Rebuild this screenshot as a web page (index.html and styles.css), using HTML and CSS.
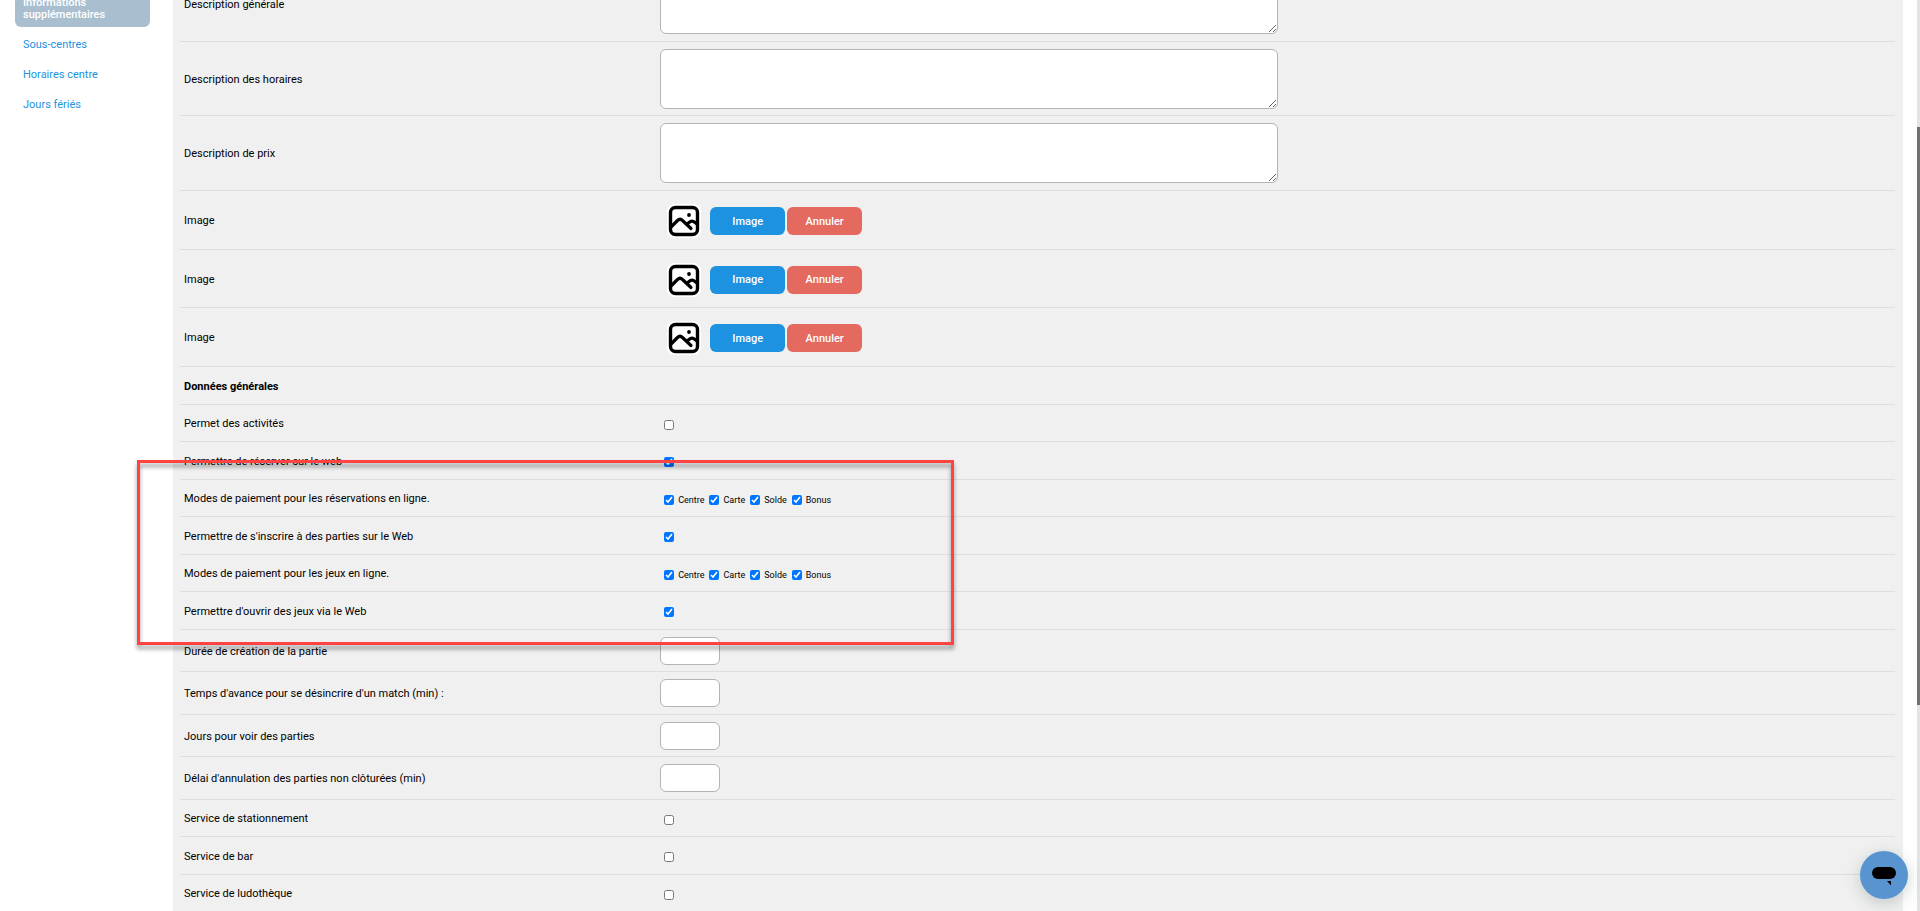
FILE: index.html
```html
<!DOCTYPE html>
<html lang="fr">
<head>
    <meta charset="UTF-8" />
    <meta name="viewport" content="width=device-width, initial-scale=1.0"/>
    <title>Informations supplémentaires</title>
    <link rel="stylesheet" href="styles.css">
</head>
<body>
<svg class="sprite" aria-hidden="true">
    <symbol id="icon-image" viewBox="0 0 36 36">
        <rect x="1" y="1" width="34" height="34" rx="7" fill="#fff"/>
        <rect x="4.5" y="4.5" width="27" height="27" rx="5" fill="none" stroke="#000" stroke-width="3.4"/>
        <circle cx="23" cy="12" r="1.9" fill="#000"/>
        <path d="M5 24L11.500 17.500Q14 15 16.500 17.500L25 25.500M21.500 21L23 19.500Q26 16.800 29 19.500L31 21" fill="none" stroke="#000" stroke-width="3.2" stroke-linecap="round"/>
    </symbol>
</svg>

<div class="layout">
    <nav class="sidebar">
        <a href="#" class="active">Informations supplémentaires</a>
        <a href="#">Sous-centres</a>
        <a href="#">Horaires centre</a>
        <a href="#">Jours fériés</a>
    </nav>

    <form class="panel">
        <div class="row row-area">
            <label class="row-label" for="descGenerale">Description générale</label>
            <div class="row-field"><textarea id="descGenerale"></textarea></div>
        </div>
        <div class="row row-area">
            <label class="row-label" for="descHoraires">Description des horaires</label>
            <div class="row-field"><textarea id="descHoraires"></textarea></div>
        </div>
        <div class="row row-area">
            <label class="row-label" for="descPrix">Description de prix</label>
            <div class="row-field"><textarea id="descPrix"></textarea></div>
        </div>

        <div class="row row-image">
            <span class="row-label">Image</span>
            <div class="row-field">
                <svg class="picture"><use href="#icon-image"/></svg>
                <button type="button" class="btn btn-blue">Image</button>
                <button type="button" class="btn btn-red">Annuler</button>
            </div>
        </div>
        <div class="row row-image">
            <span class="row-label">Image</span>
            <div class="row-field">
                <svg class="picture"><use href="#icon-image"/></svg>
                <button type="button" class="btn btn-blue">Image</button>
                <button type="button" class="btn btn-red">Annuler</button>
            </div>
        </div>
        <div class="row row-image">
            <span class="row-label">Image</span>
            <div class="row-field">
                <svg class="picture"><use href="#icon-image"/></svg>
                <button type="button" class="btn btn-blue">Image</button>
                <button type="button" class="btn btn-red">Annuler</button>
            </div>
        </div>

        <div class="row">
            <strong class="row-label">Données générales</strong>
        </div>
        <div class="row">
            <label class="row-label" for="activites">Permet des activités</label>
            <div class="row-field checks"><input type="checkbox" id="activites"></div>
        </div>
        <div class="row">
            <label class="row-label" for="reserverWeb">Permettre de réserver sur le web</label>
            <div class="row-field checks"><input type="checkbox" id="reserverWeb" checked></div>
        </div>
        <div class="row">
            <span class="row-label">Modes de paiement pour les réservations en ligne.</span>
            <div class="row-field checks">
                <label><input type="checkbox" checked>Centre</label>
                <label><input type="checkbox" checked>Carte</label>
                <label><input type="checkbox" checked>Solde</label>
                <label><input type="checkbox" checked>Bonus</label>
            </div>
        </div>
        <div class="row">
            <label class="row-label" for="inscrireWeb">Permettre de s'inscrire à des parties sur le Web</label>
            <div class="row-field checks"><input type="checkbox" id="inscrireWeb" checked></div>
        </div>
        <div class="row">
            <span class="row-label">Modes de paiement pour les jeux en ligne.</span>
            <div class="row-field checks">
                <label><input type="checkbox" checked>Centre</label>
                <label><input type="checkbox" checked>Carte</label>
                <label><input type="checkbox" checked>Solde</label>
                <label><input type="checkbox" checked>Bonus</label>
            </div>
        </div>
        <div class="row">
            <label class="row-label" for="ouvrirWeb">Permettre d'ouvrir des jeux via le Web</label>
            <div class="row-field checks"><input type="checkbox" id="ouvrirWeb" checked></div>
        </div>

        <div class="row row-input">
            <label class="row-label" for="dureeCreation">Durée de création de la partie</label>
            <div class="row-field"><input type="text" id="dureeCreation"></div>
        </div>
        <div class="row row-input">
            <label class="row-label" for="tempsAvance">Temps d'avance pour se désincrire d'un match (min) :</label>
            <div class="row-field"><input type="text" id="tempsAvance"></div>
        </div>
        <div class="row row-input">
            <label class="row-label" for="joursVoir">Jours pour voir des parties</label>
            <div class="row-field"><input type="text" id="joursVoir"></div>
        </div>
        <div class="row row-input">
            <label class="row-label" for="delaiAnnulation">Délai d'annulation des parties non clôturées (min)</label>
            <div class="row-field"><input type="text" id="delaiAnnulation"></div>
        </div>

        <div class="row">
            <label class="row-label" for="stationnement">Service de stationnement</label>
            <div class="row-field checks"><input type="checkbox" id="stationnement"></div>
        </div>
        <div class="row">
            <label class="row-label" for="bar">Service de bar</label>
            <div class="row-field checks"><input type="checkbox" id="bar"></div>
        </div>
        <div class="row">
            <label class="row-label" for="ludotheque">Service de ludothèque</label>
            <div class="row-field checks"><input type="checkbox" id="ludotheque"></div>
        </div>
    </form>

    <div class="highlight"></div>
</div>

<div class="scrollbar"><div class="scrollbar-thumb"></div></div>

<button type="button" class="chat" aria-label="Chat">
    <svg viewBox="0 0 24 20">
        <rect x="0" y="0" width="24" height="12" rx="6"/>
        <path d="M15 14H19V18.500Z"/>
    </svg>
</button>
</body>
</html>
```
FILE: styles.css
```css
* {
    box-sizing: border-box;
}

html {
    height: 100%;
    overflow: hidden;
}

body {
    margin: 0;
    height: 100%;
    overflow: hidden;
    font-family: Roboto, "Liberation Sans", sans-serif;
    font-size: 11px;
    line-height: 12px;
    color: #000;
    background: #fff;
}

.sprite {
    position: absolute;
    width: 0;
    height: 0;
}

/* Page is scrolled part way into the first row */
.layout {
    position: relative;
    display: flex;
    margin-top: -33px;
    padding-right: 17px;
}

/* Sidebar */
.sidebar {
    display: flex;
    flex-direction: column;
    gap: 6px;
    flex: 0 0 173px;
    padding: 24px 23px 0 15px;
}

.sidebar a {
    padding: 6px 8px;
    border-radius: 6px;
    color: #1c92e0;
    text-decoration: none;
}

.sidebar a.active {
    background: #a9bfd0;
    color: #fff;
    font-weight: 500;
}

/* Form */
.panel {
    flex: 1;
    padding: 0 8px 40px 7px;
    background: #f0f0f0;
}

.row {
    display: flex;
    align-items: center;
    min-height: 38px;
    border-bottom: 1px solid #dedede;
}

.row:nth-child(even) {
    min-height: 37px;
}

.row.row-area {
    min-height: 75px;
}

.row.row-area:nth-child(even) {
    min-height: 74px;
}

.row.row-image {
    min-height: 59px;
}

.row.row-image:nth-child(odd) {
    min-height: 58px;
}

.row.row-input {
    min-height: 43px;
}

.row.row-input:nth-child(even) {
    min-height: 42px;
}

.row-label {
    flex: 0 0 28%;
    padding: 2px 0 0 4px;
}

.row-field {
    flex: 1;
    display: flex;
    align-items: center;
}

.row-image .row-field {
    padding-top: 2px;
}

textarea {
    display: block;
    width: 50%;
    height: 60px;
    border: 1px solid #b4b4b4;
    border-radius: 6px;
    background: #fff;
    resize: both;
}

input[type="text"] {
    width: 60px;
    height: 28px;
    border: 1px solid #b4b4b4;
    border-radius: 6px;
    background: #fff;
}

.checks {
    gap: 5px;
    padding: 3px 0 0 4px;
    font-size: 9px;
}

.checks label {
    display: flex;
    align-items: center;
    gap: 4px;
}

input[type="checkbox"] {
    width: 10px;
    height: 10px;
    margin: 0;
}

.picture {
    width: 36px;
    height: 36px;
    margin: 0 8px 0 6px;
}

.btn {
    width: 75px;
    height: 28px;
    margin-right: 2px;
    padding: 0;
    border: none;
    border-radius: 6px;
    color: #fff;
    font-family: inherit;
    font-size: 11px;
    font-weight: 500;
    cursor: pointer;
}

.btn-blue {
    background: #1c92e0;
}

.btn-red {
    background: #e4695f;
}

/* Red frame around the web booking options */
.highlight {
    position: absolute;
    top: 493px;
    left: 137px;
    width: 817px;
    height: 185px;
    border: 3px solid #ff4343;
    filter: drop-shadow(0 4px 2px rgba(0, 0, 0, 0.4));
    pointer-events: none;
}

.scrollbar {
    position: fixed;
    top: 0;
    right: 0;
    bottom: 0;
    width: 3px;
    padding-top: 127px;
    background: #e3e3e3;
}

.scrollbar-thumb {
    height: 578px;
    background: #707070;
}

.chat {
    position: fixed;
    right: 12px;
    bottom: 12px;
    display: flex;
    justify-content: center;
    align-items: center;
    width: 48px;
    height: 48px;
    padding: 0;
    border: none;
    border-radius: 50%;
    background: #5794d0;
    box-shadow: 0 4px 16px rgba(60, 80, 80, 0.25);
    cursor: pointer;
}

.chat svg {
    width: 24px;
    height: 20px;
    margin-top: 3px;
}
```
